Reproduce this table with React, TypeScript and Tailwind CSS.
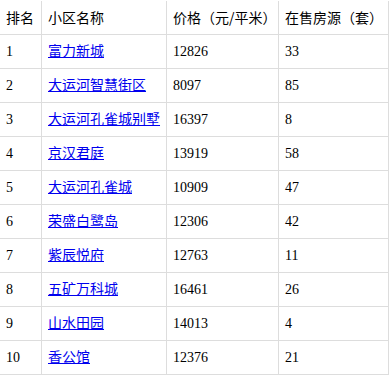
const rows = [
  { rank: 1, name: '富力新城', price: 12826, count: 33 },
  { rank: 2, name: '大运河智慧街区', price: 8097, count: 85 },
  { rank: 3, name: '大运河孔雀城别墅', price: 16397, count: 8 },
  { rank: 4, name: '京汉君庭', price: 13919, count: 58 },
  { rank: 5, name: '大运河孔雀城', price: 10909, count: 47 },
  { rank: 6, name: '荣盛白鹭岛', price: 12306, count: 42 },
  { rank: 7, name: '紫辰悦府', price: 12763, count: 11 },
  { rank: 8, name: '五矿万科城', price: 16461, count: 26 },
  { rank: 9, name: '山水田园', price: 14013, count: 4 },
  { rank: 10, name: '香公馆', price: 12376, count: 21 },
];

const cell = 'flex items-center h-[34px] pl-[6px] border-r border-b border-[#dddddd] whitespace-nowrap';

export default function App() {
  return (
    <div
      className="w-[389px] h-[375px] bg-white pt-px text-[14px] text-black overflow-hidden"
      style={{ fontFamily: '"Liberation Serif", "Noto Sans CJK SC", serif' }}
    >
      <div className="grid grid-cols-[42px_125px_112px_110px]">
        {/* Header */}
        <div className={cell} style={{ fontFamily: '"Noto Sans CJK SC", sans-serif' }}>排名</div>
        <div className={cell} style={{ fontFamily: '"Noto Sans CJK SC", sans-serif' }}>小区名称</div>
        <div className={cell} style={{ fontFamily: '"Noto Sans CJK SC", sans-serif' }}>价格（元/平米）</div>
        <div className={cell} style={{ fontFamily: '"Noto Sans CJK SC", sans-serif' }}>在售房源（套）</div>

        {rows.map((r) => (
          <div key={r.rank} className="contents">
            <div className={cell}>{r.rank}</div>
            <div className={cell}>
              <a href="#" className="text-[#0000ee] underline">{r.name}</a>
            </div>
            <div className={cell}>{r.price}</div>
            <div className={cell}>{r.count}</div>
          </div>
        ))}
      </div>
    </div>
  );
}
